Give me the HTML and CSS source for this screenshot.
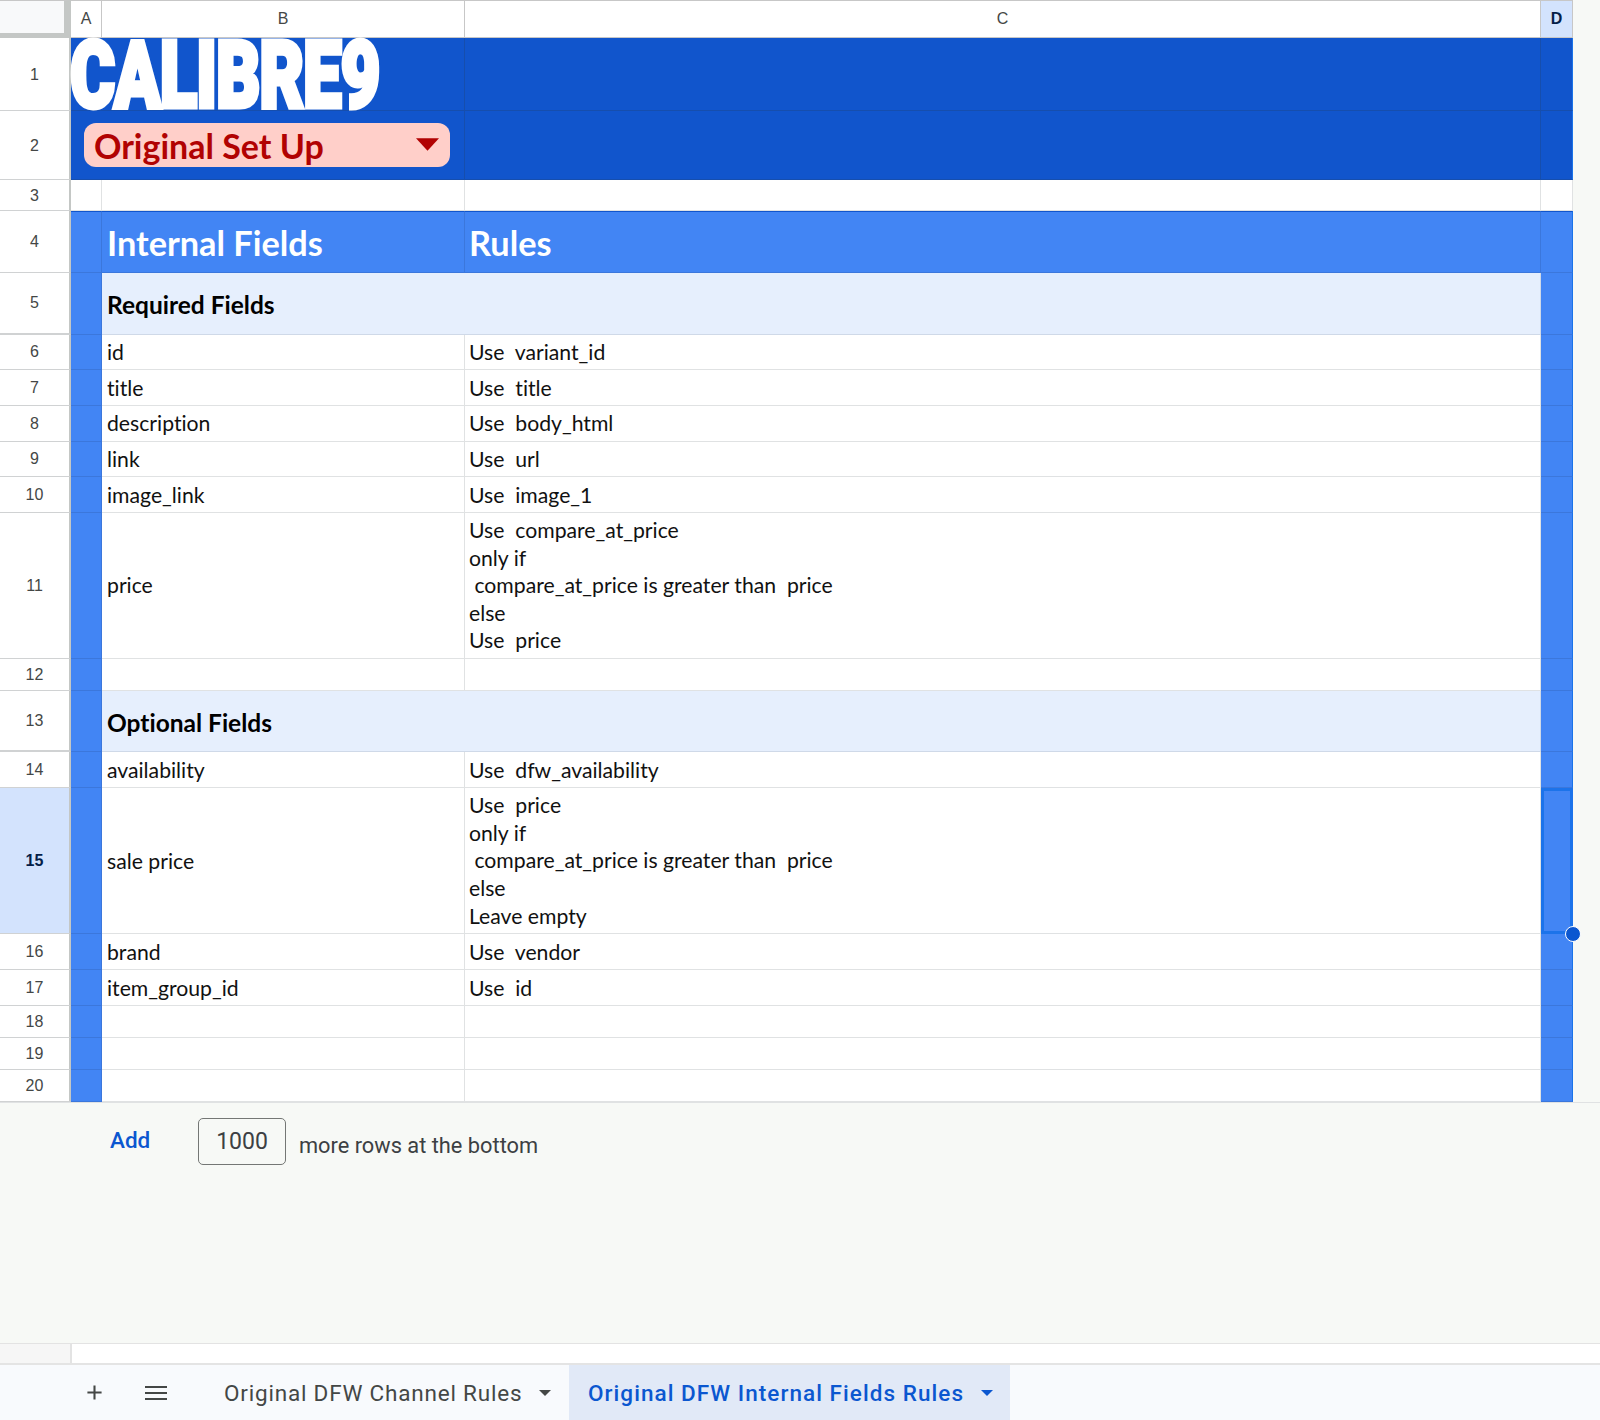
FILE: index.html
```html
<!DOCTYPE html>
<html lang="en">
<head>
<meta charset="utf-8">
<title>Original DFW Internal Fields Rules</title>
<link rel="stylesheet" href="styles.css">
</head>
<body>
<main class="page">
  <div class="sheet">
    <div class="corner"><span class="corner-fill"></span></div>
    <div class="colh">A</div><div class="colh">B</div><div class="colh">C</div><div class="colh colh-sel">D</div>

    <div class="rowh">1</div>
    <div class="cell banner span2 logo-cell"><span class="logo">CALIBRE9</span></div>
    <div class="cell banner"></div><div class="cell banner edge"></div>

    <div class="rowh">2</div>
    <div class="cell banner span2 chip-cell">
      <div class="chip"><span>Original Set Up</span><svg class="chip-arrow" viewBox="0 0 24 14" aria-hidden="true"><path d="M0 0h24L12 13z"/></svg></div>
    </div>
    <div class="cell banner"></div><div class="cell banner edge"></div>

    <div class="rowh">3</div>
    <div class="cell plain"></div><div class="cell plain"></div><div class="cell plain"></div><div class="cell plain"></div>

    <div class="rowh">4</div>
    <div class="cell blue head-top"></div>
    <div class="cell blue head-top head">Internal Fields</div>
    <div class="cell blue head-top head">Rules</div>
    <div class="cell blue head-top edge"></div>

    <div class="rowh rowh-thick">5</div>
    <div class="cell blue"></div>
    <div class="cell section span2">Required Fields</div>
    <div class="cell blue edge"></div>

    <div class="rowh">6</div><div class="cell blue"></div><div class="cell text">id</div><div class="cell text">Use  variant_id</div><div class="cell blue edge"></div>
    <div class="rowh">7</div><div class="cell blue"></div><div class="cell text">title</div><div class="cell text">Use  title</div><div class="cell blue edge"></div>
    <div class="rowh">8</div><div class="cell blue"></div><div class="cell text">description</div><div class="cell text">Use  body_html</div><div class="cell blue edge"></div>
    <div class="rowh">9</div><div class="cell blue"></div><div class="cell text">link</div><div class="cell text">Use  url</div><div class="cell blue edge"></div>
    <div class="rowh">10</div><div class="cell blue"></div><div class="cell text">image_link</div><div class="cell text">Use  image_1</div><div class="cell blue edge"></div>

    <div class="rowh">11</div><div class="cell blue"></div><div class="cell text">price</div>
    <div class="cell text multi">Use  compare_at_price
only if
 compare_at_price is greater than  price
else
Use  price</div><div class="cell blue edge"></div>

    <div class="rowh">12</div><div class="cell blue"></div><div class="cell plain"></div><div class="cell plain"></div><div class="cell blue edge"></div>

    <div class="rowh rowh-thick">13</div>
    <div class="cell blue"></div>
    <div class="cell section span2">Optional Fields</div>
    <div class="cell blue edge"></div>

    <div class="rowh">14</div><div class="cell blue"></div><div class="cell text">availability</div><div class="cell text">Use  dfw_availability</div><div class="cell blue edge"></div>

    <div class="rowh rowh-sel">15</div><div class="cell blue"></div><div class="cell text">sale price</div>
    <div class="cell text multi">Use  price
only if
 compare_at_price is greater than  price
else
Leave empty</div>
    <div class="cell blue edge selected"><span class="handle"></span></div>

    <div class="rowh">16</div><div class="cell blue"></div><div class="cell text">brand</div><div class="cell text">Use  vendor</div><div class="cell blue edge"></div>
    <div class="rowh">17</div><div class="cell blue"></div><div class="cell text">item_group_id</div><div class="cell text">Use  id</div><div class="cell blue edge"></div>
    <div class="rowh">18</div><div class="cell blue"></div><div class="cell plain"></div><div class="cell plain"></div><div class="cell blue edge"></div>
    <div class="rowh">19</div><div class="cell blue"></div><div class="cell plain"></div><div class="cell plain"></div><div class="cell blue edge"></div>
    <div class="rowh">20</div><div class="cell blue"></div><div class="cell plain"></div><div class="cell plain"></div><div class="cell blue edge"></div>
  </div>

  <div class="add-rows">
    <span class="add-link">Add</span>
    <span class="add-input">1000</span>
    <span class="add-label">more rows at the bottom</span>
  </div>

  <div class="scrollbar"><span class="scroll-gutter"></span></div>

  <nav class="tabs">
    <svg class="tab-icon plus" viewBox="0 0 18 18" aria-hidden="true"><path d="M9 1.500v15M1.500 9h15"/></svg>
    <svg class="tab-icon menu" viewBox="0 0 22 16" aria-hidden="true"><path d="M0 2h22M0 8h22M0 14h22"/></svg>
    <div class="tab"><span>Original DFW Channel Rules</span><svg class="tab-arrow" viewBox="0 0 12 6" aria-hidden="true"><path d="M0 0h12L6 6z"/></svg></div>
    <div class="tab tab-active"><span>Original DFW Internal Fields Rules</span><svg class="tab-arrow" viewBox="0 0 12 6" aria-hidden="true"><path d="M0 0h12L6 6z"/></svg></div>
  </nav>
</main>
</body>
</html>
```
FILE: styles.css
```css
* { box-sizing: border-box; }
html, body { margin: 0; padding: 0; }
body { background: #f7f9f6; font-family: "Liberation Sans", Arial, sans-serif; }

.page {
  width: 1600px;
  height: 1420px;
  display: flex;
  flex-direction: column;
  overflow: hidden;
}

.sheet {
  position: relative;
  flex: none;
  width: 1573px;
  display: grid;
  grid-template-columns: 71px 31px 363px 1076px 32px;
  grid-template-rows: 38px 73px 69px 31px 62px 61.500px 35.700px 35.700px 35.700px 35.700px 35.700px 146px 32px 61.500px 35.700px 146px 36px 36px 32px 32px 32.300px;
}

.corner {
  background: #fff;
  border-top: 1px solid #c7c7c7;
  border-right: 7px solid #c4c7c5;
  border-bottom: 5px solid #c4c7c5;
}
.corner-fill { display: block; height: 100%; background: #f8f9fa; }

.colh {
  display: flex;
  align-items: center;
  justify-content: center;
  background: #fff;
  border-top: 1px solid #c7c7c7;
  border-right: 1px solid #c7c7c7;
  border-bottom: 1px solid #c7c7c7;
  font-size: 16px;
  color: #444746;
}
.colh-sel { background: #d3e3fd; color: #041e49; font-weight: 700; }

.rowh {
  display: flex;
  align-items: center;
  justify-content: center;
  background: #fff;
  border-right: 2px solid #c4c7c5;
  border-bottom: 1px solid #d0d2d3;
  padding-top: 1px;
  font-size: 16px;
  color: #444746;
}
.rowh-thick { border-bottom-width: 2px; }
.rowh-sel { background: #d3e3fd; color: #041e49; font-weight: 700; }

.cell {
  min-width: 0;
  font-family: Lato, "Open Sans", sans-serif;
  font-variant-ligatures: none;
  color: #000;
  background: #fff;
  border-right: 1px solid #e0e2e3;
  border-bottom: 1px solid #e0e2e3;
}
.span2 { grid-column: span 2; }

.banner { background: #1155cc; border-color: #164ead; }
.plain { background: #fff; }
.blue { background: #4285f4; border-color: #3b77dc; }
.edge { border-right: 1px solid #1a73e8; }
.head-top { border-top: 1px solid #1155cc; }
.head {
  display: flex;
  align-items: center;
  padding: 0 0 0 5px;
  font-size: 34.300px;
  font-weight: 700;
  color: #fff;
}
.section {
  display: flex;
  align-items: center;
  padding: 2px 0 0 5px;
  background: #e6effd;
  border-color: #cfd9e8;
  font-size: 24.500px;
  font-weight: 700;
}
.text {
  display: flex;
  align-items: center;
  padding-left: 5px;
  font-size: 21.200px;
  white-space: pre;
  color: #111;
}
.text + .text, .head + .head { padding-left: 4px; }
.multi { padding-top: 1px; line-height: 27.600px; }

.logo-cell { display: block; }
.logo {
  display: block;
  width: max-content;
  transform-origin: 0 0;
  transform: scale(.742, 1) translate(-1px, 2px);
  font-family: Roboto, "Liberation Sans", sans-serif;
  font-size: 92px;
  line-height: 71px;
  font-weight: 900;
  letter-spacing: -1px;
  color: #fff;
  -webkit-text-stroke: 5px #fff;
}

.chip-cell { display: flex; align-items: flex-start; padding: 12px 0 0 13px; }
.chip {
  width: 366px;
  height: 44px;
  display: flex;
  align-items: center;
  justify-content: space-between;
  padding: 0 11px 0 10px;
  background: #ffcfc9;
  border-radius: 12px;
  font-family: Lato, "Open Sans", sans-serif;
  font-size: 34px;
  font-weight: 700;
  color: #b10202;
  white-space: nowrap;
}
.chip-arrow { width: 23px; height: 14px; fill: #b10202; }

.selected { position: relative; border: 3px solid #1c73ea; }
.handle {
  position: absolute;
  right: -11px;
  bottom: -11px;
  width: 16px;
  height: 16px;
  background: #0b57d0;
  border: 1.500px solid #fff;
  border-radius: 50%;
  z-index: 2;
}

.add-rows {
  flex: none;
  height: 241px;
  display: flex;
  align-items: flex-start;
  padding: 15px 0 0 110px;
  font-family: Roboto, sans-serif;
  color: #3c4043;
  border-top: 1px solid #e0e2e3;
}
.add-link { font-size: 22.500px; font-weight: 500; color: #0b57d0; margin-top: 9px; width: 88px; }
.add-input {
  width: 88px;
  height: 47px;
  display: flex;
  align-items: center;
  justify-content: center;
  border: 1.500px solid #747775;
  border-radius: 5px;
  font-size: 23px;
}
.add-label { font-size: 21.800px; margin: 15px 0 0 13px; }

.scrollbar {
  flex: none;
  height: 20px;
  display: flex;
  background: #fff;
  border-top: 1px solid #e3e3e3;
}
.scroll-gutter { width: 72px; background: #f6f6f6; border-right: 2px solid #e3e3e3; }

.tabs {
  flex: 1;
  display: flex;
  align-items: center;
  padding-left: 86px;
  background: #f8fafd;
  border-top: 2px solid #e4e4e4;
  font-family: Roboto, sans-serif;
}
.tab-icon { flex: none; fill: none; stroke: #444746; }
.plus { width: 17px; height: 17px; stroke-width: 2.200; }
.menu { width: 22px; height: 16px; margin-left: 42px; stroke-width: 2.200; }
.tab {
  flex: none;
  height: 100%;
  display: flex;
  align-items: center;
  font-size: 22.500px;
  letter-spacing: .8px;
  color: #444746;
  padding-left: 57px;
  width: 402px;
  white-space: nowrap;
}
.tab-arrow { flex: none; width: 12px; height: 6px; margin-left: 17px; fill: currentColor; }
.tab-active {
  width: 441px;
  padding-left: 19px;
  letter-spacing: 1.050px;
  background: #e1e9f7;
  color: #0b57d0;
  font-weight: 500;
}
```
